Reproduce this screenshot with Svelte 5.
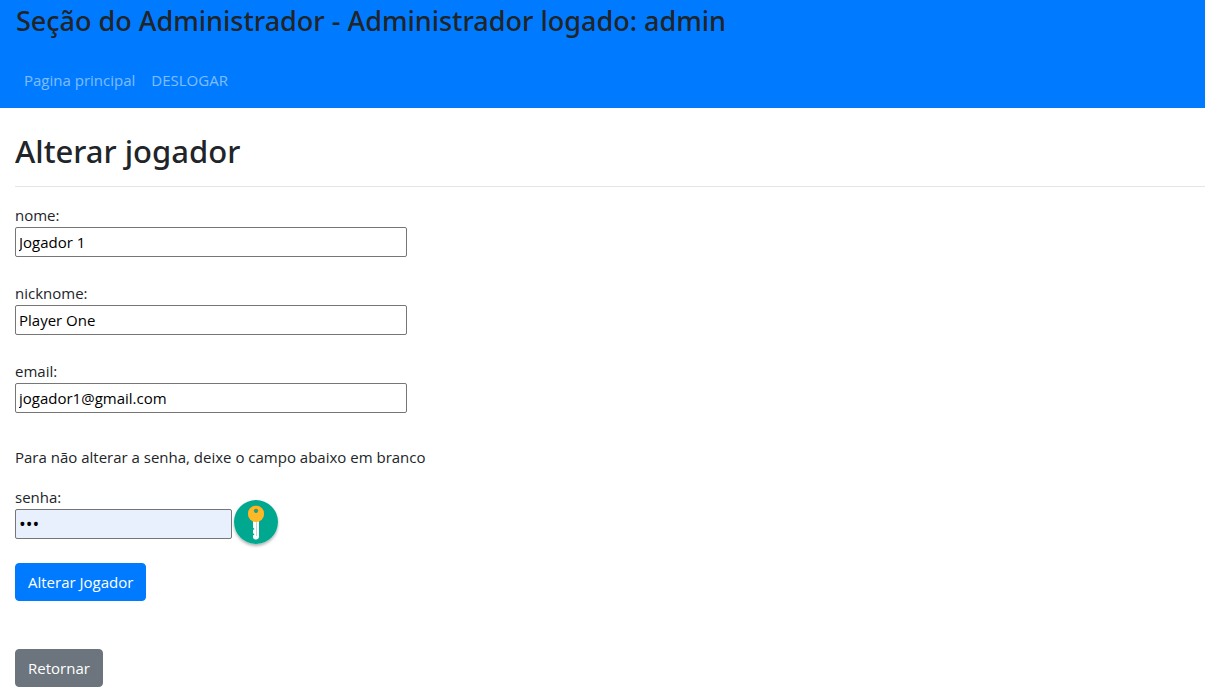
<script>
  let fields = $state([
    { id: 'nome', type: 'text', value: 'Jogador 1' },
    { id: 'nicknome', type: 'text', value: 'Player One' },
    { id: 'email', type: 'email', value: 'jogador1@gmail.com' }
  ]);
  let senha = $state('123');
</script>

<header>
  <h3>Seção do Administrador - Administrador logado: admin</h3>
  <nav>
    <a href="#principal">Pagina principal</a>
    <a href="#deslogar">DESLOGAR</a>
  </nav>
</header>

<main>
  <h2>Alterar jogador</h2>
  <hr />
  <form onsubmit={(e) => e.preventDefault()}>
    {#each fields as field (field.id)}
      <div class="field">
        <label for={field.id}>{field.id}:</label>
        <input id={field.id} type={field.type} bind:value={field.value} />
      </div>
    {/each}
    <p>Para não alterar a senha, deixe o campo abaixo em branco</p>
    <div class="field">
      <label for="senha">senha:</label>
      <div class="password">
        <input id="senha" type="password" bind:value={senha} />
        <button type="button" class="key" aria-label="senha">
          <svg viewBox="0 0 44 44" width="44" height="44" aria-hidden="true">
            <circle cx="22" cy="22" r="22" fill="#00a88f" />
            <path d="M19 20h6v16a3 3 0 0 1-6 1v-1.500l1.500-1L19 33v-3l1.500-1L19 27.500z" fill="#fff" />
            <path d="M22.500 22v14" stroke="#c9d3d3" stroke-width="1" />
            <circle cx="22" cy="13.500" r="8" fill="#e09b1c" />
            <circle cx="22" cy="14" r="8" fill="#fdb827" />
            <circle cx="22" cy="11" r="2" fill="#00a88f" />
            <path d="M20 11a2 2 0 0 1 4 0" fill="none" stroke="#9a8a32" stroke-width="1" />
          </svg>
        </button>
      </div>
    </div>
    <button type="submit" class="btn primary">Alterar Jogador</button>
  </form>
  <a href="#retornar" class="btn secondary">Retornar</a>
</main>

<style>
  :global(body) {
    margin: 0;
    background: #fff;
    color: #212529;
    font-family: "Segoe UI", "Open Sans", "Noto Sans", sans-serif;
    font-size: 15px;
    line-height: 24px;
  }
  header {
    background: #007bff;
    padding: 4px 16px 16px;
  }
  h2,
  h3 {
    margin: 0;
    font-family: "Segoe UI", "Noto Sans", "Open Sans", sans-serif;
    font-weight: 500;
  }
  h3 {
    font-size: 27px;
    line-height: 34px;
  }
  nav {
    display: flex;
    gap: 16px;
    padding: 30px 8px 0;
  }
  nav a {
    color: rgba(255, 255, 255, 0.5);
    text-decoration: none;
  }
  main {
    padding: 24px 0 6px 15px;
  }
  h2 {
    font-size: 31px;
    line-height: 38px;
  }
  hr {
    margin: 16px 0;
    border: 0;
    border-top: 1px solid #e5e5e5;
  }
  form {
    margin-bottom: 48px;
  }
  .field {
    margin-bottom: 24px;
  }
  label {
    display: block;
  }
  input {
    display: block;
    box-sizing: border-box;
    width: 392px;
    max-width: 100%;
    height: 30px;
    padding: 1px 3px;
    border: 1px solid #767676;
    border-radius: 2px;
    background: #fff;
    color: #000;
    font-family: inherit;
    font-size: 15px;
  }
  p {
    margin: 32px 0 16px;
  }
  .password {
    display: flex;
    align-items: flex-start;
    gap: 2px;
  }
  .password input {
    width: 217px;
    background: #e8f0fe;
    font-size: 18px;
  }
  /* Negative margins keep the round button from stretching the row */
  .key {
    width: 44px;
    height: 44px;
    margin: -9px 0 -5px;
    padding: 0;
    border: 0;
    border-radius: 50%;
    background: none;
    box-shadow: 0 2px 3px rgba(0, 0, 0, 0.3);
  }
  .key svg {
    display: block;
  }
  .btn {
    display: inline-block;
    box-sizing: border-box;
    height: 38px;
    padding: 6px 12px;
    border: 1px solid;
    border-radius: 4px;
    color: #fff;
    font-family: inherit;
    font-size: 15px;
    line-height: 24px;
    text-decoration: none;
    vertical-align: top;
  }
  .primary {
    background: #007bff;
    border-color: #007bff;
  }
  .secondary {
    background: #6c757d;
    border-color: #6c757d;
  }
</style>
